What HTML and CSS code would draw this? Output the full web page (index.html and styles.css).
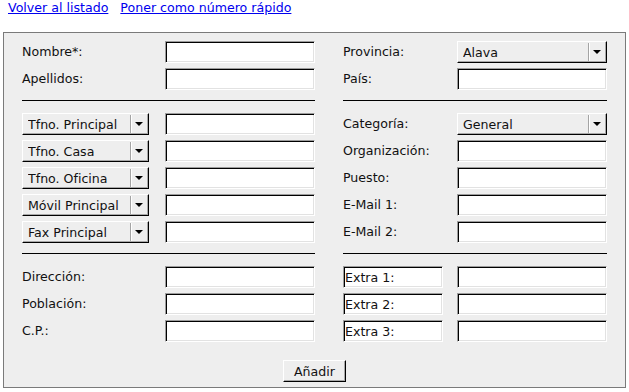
FILE: index.html
```html
<!DOCTYPE html>
<html lang="es">
<head>
<meta charset="utf-8">
<title>Contacto</title>
<link rel="stylesheet" href="styles.css">
</head>
<body>
<nav class="links"><a href="#">Volver al listado</a><a class="link2" href="#">Poner como número rápido</a></nav>
<form class="panel">
  <div class="grid">
    <div class="cell left"><label class="lbl">Nombre*:</label><input class="field" type="text"></div>
    <div class="cell right"><label class="lbl">Provincia:</label><div class="sel sel-wide"><select><option>Alava</option></select><span class="arrow"></span></div></div>

    <div class="cell left"><label class="lbl">Apellidos:</label><input class="field" type="text"></div>
    <div class="cell right"><label class="lbl">País:</label><input class="field" type="text"></div>

    <hr class="sep"><hr class="sep">

    <div class="cell left"><div class="sel sel-type"><select><option>Tfno. Principal</option></select><span class="arrow"></span></div><input class="field" type="text"></div>
    <div class="cell right"><label class="lbl">Categoría:</label><div class="sel sel-wide"><select><option>General</option></select><span class="arrow"></span></div></div>

    <div class="cell left"><div class="sel sel-type"><select><option>Tfno. Casa</option></select><span class="arrow"></span></div><input class="field" type="text"></div>
    <div class="cell right"><label class="lbl">Organización:</label><input class="field" type="text"></div>

    <div class="cell left"><div class="sel sel-type"><select><option>Tfno. Oficina</option></select><span class="arrow"></span></div><input class="field" type="text"></div>
    <div class="cell right"><label class="lbl">Puesto:</label><input class="field" type="text"></div>

    <div class="cell left"><div class="sel sel-type"><select><option>Móvil Principal</option></select><span class="arrow"></span></div><input class="field" type="text"></div>
    <div class="cell right"><label class="lbl">E-Mail 1:</label><input class="field" type="text"></div>

    <div class="cell left"><div class="sel sel-type"><select><option>Fax Principal</option></select><span class="arrow"></span></div><input class="field" type="text"></div>
    <div class="cell right"><label class="lbl">E-Mail 2:</label><input class="field" type="text"></div>

    <hr class="sep"><hr class="sep">

    <div class="cell left"><label class="lbl">Dirección:</label><input class="field" type="text"></div>
    <div class="cell right"><input class="field field-extra" type="text" value="Extra 1:"><input class="field" type="text"></div>

    <div class="cell left"><label class="lbl">Población:</label><input class="field" type="text"></div>
    <div class="cell right"><input class="field field-extra" type="text" value="Extra 2:"><input class="field" type="text"></div>

    <div class="cell left"><label class="lbl">C.P.:</label><input class="field" type="text"></div>
    <div class="cell right"><input class="field field-extra" type="text" value="Extra 3:"><input class="field" type="text"></div>
  </div>
  <div class="actions"><button class="btn" type="button">Añadir</button></div>
</form>
</body>
</html>
```
FILE: styles.css
```css
html, body {
  margin: 0;
  padding: 0;
  background: #ffffff;
}
body {
  font-family: "DejaVu Sans", "Bitstream Vera Sans", sans-serif;
  font-size: 12.6px;
  color: #111;
}
.links {
  height: 16px;
  line-height: 16px;
  padding-left: 8px;
  white-space: nowrap;
}
.links a {
  color: #0000ee;
  text-decoration: underline;
}
.link2 {
  margin-left: 12px;
}
.panel {
  box-sizing: border-box;
  margin: 16px 0 0 3px;
  width: 623px;
  height: 356px;
  border: 1px solid #7a7a7a;
  background: #eeeeee;
  padding: 8px 0 5px 18px;
}
.grid {
  display: grid;
  grid-template-columns: 293px 264px;
  column-gap: 28px;
  row-gap: 5px;
}
.cell {
  display: grid;
  height: 22px;
  align-items: center;
}
.cell.left {
  grid-template-columns: 143px 150px;
}
.cell.right {
  grid-template-columns: 114px 150px;
}
.lbl {
  white-space: nowrap;
  line-height: 22px;
}
.field {
  box-sizing: border-box;
  width: 150px;
  height: 22px;
  margin: 0;
  padding: 0 2px;
  font: inherit;
  color: #111;
  background: #ffffff;
  border: 1px solid;
  border-color: #9c9c9c #ffffff #ffffff #9c9c9c;
  box-shadow: inset 1px 1px 0 #000000, inset -1px -1px 0 #e2e2e2;
  outline: none;
}
.field-extra {
  width: 100px;
  padding: 0 1px;
}
.sel {
  position: relative;
  height: 22px;
}
.sel-wide {
  width: 150px;
}
.sel-type {
  width: 127px;
}
.sel select {
  -webkit-appearance: none;
  appearance: none;
  box-sizing: border-box;
  width: 100%;
  height: 22px;
  margin: 0;
  padding: 0 18px 0 5px;
  font: inherit;
  color: #111;
  background: #eeeeee;
  border: 1px solid;
  border-color: #ffffff #000000 #000000 #ffffff;
  box-shadow: inset -1px -1px 0 #a8a8a8;
  border-radius: 0;
  outline: none;
}
.arrow {
  position: absolute;
  top: 2px;
  bottom: 2px;
  right: 2px;
  width: 16px;
  border-left: 1px solid #a4a4a4;
  box-shadow: inset 1px 0 0 #ffffff;
  pointer-events: none;
}
.arrow::after {
  content: "";
  position: absolute;
  left: 4px;
  top: 7px;
  width: 8px;
  height: 4px;
  background: #000;
  clip-path: polygon(0 0, 100% 0, 50% 100%);
}
.sep {
  height: 0;
  margin: 5px 0 7px 0;
  border: 0;
  border-top: 1px solid #000;
}
.actions {
  display: flex;
  justify-content: center;
  margin: 18px 0 0 -18px;
}
.btn {
  box-sizing: border-box;
  width: 63px;
  height: 22px;
  margin: 0;
  padding: 0;
  font: inherit;
  color: #111;
  background: #eeeeee;
  border: 1px solid;
  border-color: #ffffff #000000 #000000 #ffffff;
  box-shadow: inset -1px -1px 0 #a8a8a8;
  border-radius: 0;
}
```
